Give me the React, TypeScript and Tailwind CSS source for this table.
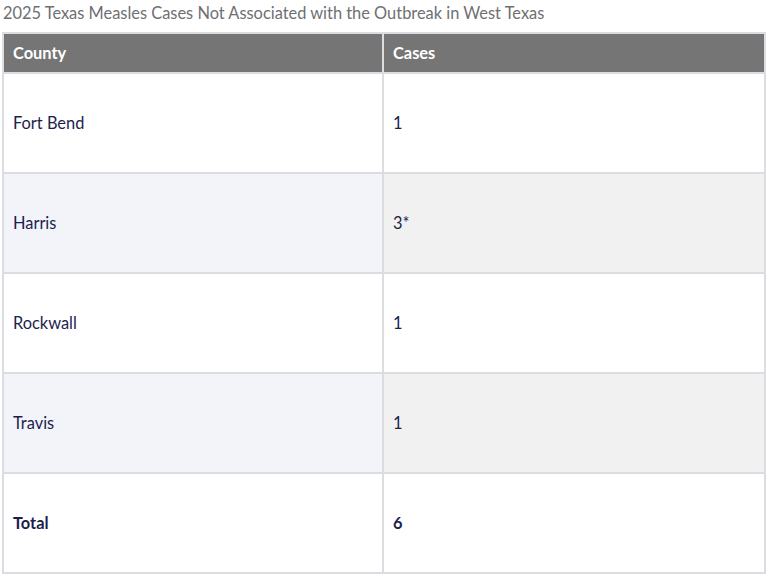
import React from "react";

const rows: { county: string; cases: string; bold?: boolean }[] = [
  { county: "Fort Bend", cases: "1" },
  { county: "Harris", cases: "3*" },
  { county: "Rockwall", cases: "1" },
  { county: "Travis", cases: "1" },
  { county: "Total", cases: "6", bold: true },
];

export default function App() {
  return (
    <div
      className="w-[766px] h-[574px] bg-white overflow-hidden"
      style={{ fontFamily: "Lato, 'Noto Sans', sans-serif" }}
    >
      <div className="h-[32px] pl-[3px] pt-[2px] text-[16.4px] leading-[22px] text-[#6e6f73]">
        2025 Texas Measles Cases Not Associated with the Outbreak in West Texas
      </div>
      <div className="ml-[2px] w-[764px] grid grid-cols-[378px_380px] gap-[2px] p-[2px] bg-[#dcdde2]">
        <div className="h-[38px] bg-[#757575] text-white font-bold text-[16.4px] flex items-center pl-[9px]">
          County
        </div>
        <div className="h-[38px] bg-[#757575] text-white font-bold text-[16.4px] flex items-center pl-[9px]">
          Cases
        </div>
        {rows.map((r, i) => {
          const odd = i % 2 === 1;
          return (
            <React.Fragment key={r.county}>
              <div
                className={`h-[98px] flex items-center pl-[9px] text-[16.4px] text-[#1c1e4d] ${
                  odd ? "bg-[#f3f4f9]" : "bg-white"
                } ${r.bold ? "font-bold" : ""}`}
              >
                {r.county}
              </div>
              <div
                className={`h-[98px] flex items-center pl-[9px] text-[16.4px] text-[#1c1e4d] ${
                  odd ? "bg-[#f1f1f1]" : "bg-white"
                } ${r.bold ? "font-bold" : ""}`}
              >
                {r.cases}
              </div>
            </React.Fragment>
          );
        })}
      </div>
    </div>
  );
}
